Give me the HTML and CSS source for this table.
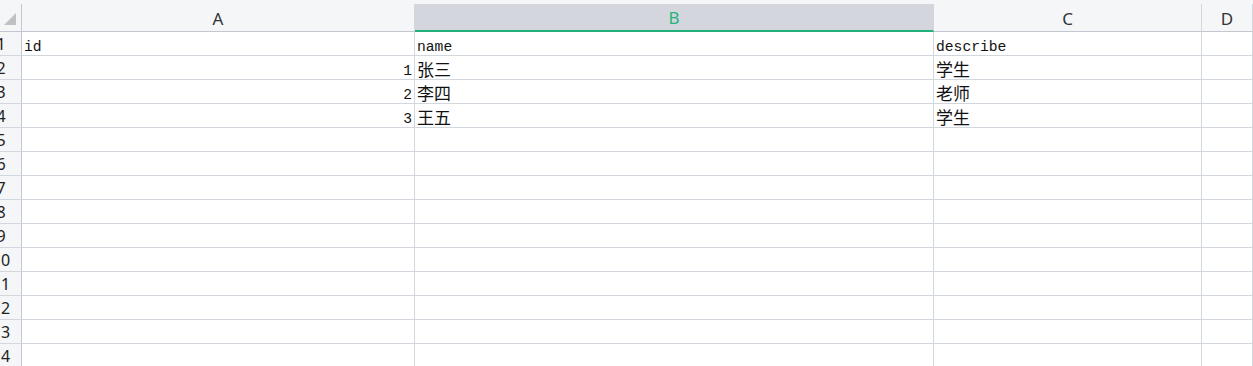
FILE: index.html
```html
<!DOCTYPE html>
<html lang="zh-CN">
<head>
    <meta charset="UTF-8">
    <title>Sheet1</title>
    <link rel="stylesheet" href="styles.css">
</head>
<body>
    <div class="top-strip"></div>
    <div class="sheet">
        <!-- column headers -->
        <div class="head corner"><span class="select-all"></span></div>
        <div class="head">A</div>
        <div class="head active">B</div>
        <div class="head">C</div>
        <div class="head">D</div>

        <div class="row-num"><span>1</span></div>
        <div class="cell"><span>id</span></div>
        <div class="cell"><span>name</span></div>
        <div class="cell"><span>describe</span></div>
        <div class="cell"></div>

        <div class="row-num"><span>2</span></div>
        <div class="cell num"><span>1</span></div>
        <div class="cell"><span class="cjk">张三</span></div>
        <div class="cell"><span class="cjk">学生</span></div>
        <div class="cell"></div>

        <div class="row-num"><span>3</span></div>
        <div class="cell num"><span>2</span></div>
        <div class="cell"><span class="cjk">李四</span></div>
        <div class="cell"><span class="cjk">老师</span></div>
        <div class="cell"></div>

        <div class="row-num"><span>4</span></div>
        <div class="cell num"><span>3</span></div>
        <div class="cell"><span class="cjk">王五</span></div>
        <div class="cell"><span class="cjk">学生</span></div>
        <div class="cell"></div>

        <div class="row-num"><span>5</span></div>
        <div class="cell"></div><div class="cell"></div><div class="cell"></div><div class="cell"></div>

        <div class="row-num"><span>6</span></div>
        <div class="cell"></div><div class="cell"></div><div class="cell"></div><div class="cell"></div>

        <div class="row-num"><span>7</span></div>
        <div class="cell"></div><div class="cell"></div><div class="cell"></div><div class="cell"></div>

        <div class="row-num"><span>8</span></div>
        <div class="cell"></div><div class="cell"></div><div class="cell"></div><div class="cell"></div>

        <div class="row-num"><span>9</span></div>
        <div class="cell"></div><div class="cell"></div><div class="cell"></div><div class="cell"></div>

        <div class="row-num"><span>10</span></div>
        <div class="cell"></div><div class="cell"></div><div class="cell"></div><div class="cell"></div>

        <div class="row-num"><span>11</span></div>
        <div class="cell"></div><div class="cell"></div><div class="cell"></div><div class="cell"></div>

        <div class="row-num"><span>12</span></div>
        <div class="cell"></div><div class="cell"></div><div class="cell"></div><div class="cell"></div>

        <div class="row-num"><span>13</span></div>
        <div class="cell"></div><div class="cell"></div><div class="cell"></div><div class="cell"></div>

        <div class="row-num"><span>14</span></div>
        <div class="cell"></div><div class="cell"></div><div class="cell"></div><div class="cell"></div>
    </div>
</body>
</html>
```

FILE: styles.css
```css
body {
    margin: 0;
    background: #fff;
    overflow: hidden;
    font-family: "Noto Sans", "Noto Sans CJK SC", sans-serif;
}
.top-strip {
    height: 4px;
    background: #f5f6f8;
}
.sheet {
    display: grid;
    grid-template-columns: 22px 393px 519px 268px 51px;
    grid-template-rows: 28px repeat(14, 24px);
}
.head, .row-num, .cell {
    box-sizing: border-box;
    overflow: hidden;
    border-right: 1px solid #d2d6dd;
    border-bottom: 1px solid #d2d6dd;
}
.head {
    display: flex;
    align-items: center;
    justify-content: center;
    background: #f5f6f8;
    border-bottom-color: #c3c7cf;
    color: #333;
    font-size: 17px;
    padding-top: 1px;
}
.head.active {
    background: #d3d6dd;
    color: #26b47a;
    border-bottom: 2px solid #21b07a;
}
.corner {
    border-right-color: #c3c7cf;
    justify-content: flex-end;
    align-items: flex-end;
    padding: 0 5px 6px 0;
}
.select-all {
    width: 0;
    height: 0;
    border-left: 12px solid transparent;
    border-bottom: 12px solid #bfc1c4;
}
.row-num {
    display: flex;
    align-items: center;
    background: #f5f6f8;
    border-right-color: #c3c7cf;
    color: #222;
    font-size: 16px;
}
.row-num span {
    flex: none;
    width: 40px;
    margin-left: -19px;
    text-align: center;
}
.cell {
    display: flex;
    align-items: flex-end;
    padding: 0 2px;
    color: #111;
    font-family: "Liberation Mono", "Noto Sans CJK SC", monospace;
    font-size: 14.67px;
}
.cell span {
    line-height: 1;
}
.cell.num {
    justify-content: flex-end;
}
.cell .cjk {
    font-family: "Noto Sans CJK SC", sans-serif;
    font-size: 17px;
    margin-bottom: 2px;
}
```
